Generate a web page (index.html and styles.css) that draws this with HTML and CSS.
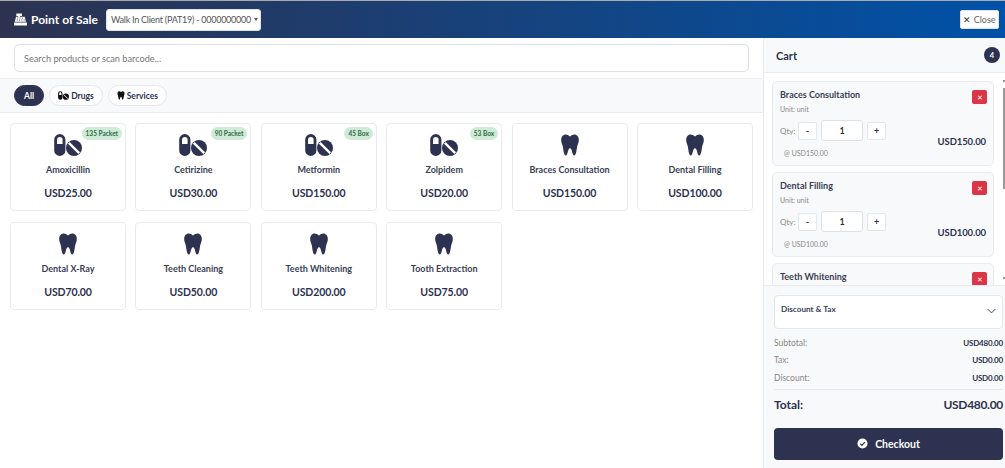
FILE: index.html
```html
<!DOCTYPE html>
<html lang="en">
<head>
<meta charset="utf-8">
<title>Point of Sale</title>
<link rel="stylesheet" href="styles.css">
</head>
<body>
<svg class="defs" width="0" height="0" aria-hidden="true">
  <symbol id="pills" viewBox="0 0 28 22">
    <path d="M5.800 0a5.600 5.600 0 0 1 5.600 5.600v10.800a5.600 5.600 0 0 1-11.200 0V5.600A5.600 5.600 0 0 1 5.800 0z" fill="currentColor"/>
    <path d="M3 10V5.800a2.800 2.800 0 0 1 5.600 0V10z" fill="#fff"/>
    <circle cx="20" cy="14" r="8" fill="currentColor"/>
    <path d="M14.800 8.800l10.400 10.400" stroke="#fff" stroke-width="2.400"/>
  </symbol>
  <symbol id="tooth" viewBox="0 0 20 22">
    <path transform="translate(1 0) scale(.9 1)" d="M5.200 0.500c1.900 0 3.200 1 4.800 1.900 1.600-.9 2.900-1.900 4.800-1.900 3 0 5 2.400 5 5.400 0 2.800-1.300 4.200-1.900 6.800-.6 2.700-.9 8.800-3.300 8.800-2.500 0-1.800-7.200-4.600-7.200s-2.100 7.200-4.600 7.200c-2.400 0-2.700-6.100-3.300-8.800C1.500 10.100.2 8.700.2 5.900c0-3 2-5.400 5-5.400z" fill="currentColor"/>
  </symbol>
</svg>
<header class="topbar">
  <div class="brand">
    <svg class="brand-icon" viewBox="0 0 14 13"><path d="M2.500 0h6v2.600h-2v1h5l1.400 5.400H.8L2.200 3.600h2.300v-1h-2zM0 9.800h14V13H0z" fill="currentColor"/><path d="M3.500 5h1M6 5h1M8.500 5h1M3 7h1M5.500 7h1M8 7h1M10.500 7h1" stroke="#2d3250" stroke-width="1"/></svg>
    <span>Point of Sale</span>
  </div>
  <button class="client">Walk In Client (PAT19) - 0000000000<i class="caret"></i></button>
  <button class="close"><span class="x">✕</span> Close</button>
</header>
<div class="layout">
  <main class="main">
    <div class="search-wrap"><input class="search" placeholder="Search products or scan barcode..."></div>
    <nav class="filters">
      <span class="pill active">All</span>
      <span class="pill"><svg class="pill-icon wide"><use href="#pills"/></svg>Drugs</span>
      <span class="pill"><svg class="pill-icon"><use href="#tooth"/></svg>Services</span>
    </nav>
    <section class="grid">
      <article class="card"><span class="stock">135 Packet</span><svg class="icon"><use href="#pills"/></svg><h3>Amoxicillin</h3><p>USD25.00</p></article>
      <article class="card"><span class="stock">90 Packet</span><svg class="icon"><use href="#pills"/></svg><h3>Cetirizine</h3><p>USD30.00</p></article>
      <article class="card"><span class="stock">45 Box</span><svg class="icon"><use href="#pills"/></svg><h3>Metformin</h3><p>USD150.00</p></article>
      <article class="card"><span class="stock">53 Box</span><svg class="icon"><use href="#pills"/></svg><h3>Zolpidem</h3><p>USD20.00</p></article>
      <article class="card"><svg class="icon"><use href="#tooth"/></svg><h3>Braces Consultation</h3><p>USD150.00</p></article>
      <article class="card"><svg class="icon"><use href="#tooth"/></svg><h3>Dental Filling</h3><p>USD100.00</p></article>
      <article class="card"><svg class="icon"><use href="#tooth"/></svg><h3>Dental X-Ray</h3><p>USD70.00</p></article>
      <article class="card"><svg class="icon"><use href="#tooth"/></svg><h3>Teeth Cleaning</h3><p>USD50.00</p></article>
      <article class="card"><svg class="icon"><use href="#tooth"/></svg><h3>Teeth Whitening</h3><p>USD200.00</p></article>
      <article class="card"><svg class="icon"><use href="#tooth"/></svg><h3>Tooth Extraction</h3><p>USD75.00</p></article>
    </section>
  </main>
  <aside class="cart">
    <div class="cart-head"><strong>Cart</strong><span class="count">4</span></div>
    <div class="items-wrap">
      <div class="items">
        <div class="item">
          <div class="item-top"><div><h4>Braces Consultation</h4><small>Unit: unit</small></div><button class="del">✕</button></div>
          <div class="item-bottom">
            <div>
              <div class="qty"><span class="qty-label">Qty:</span><button>-</button><span class="qty-val">1</span><button>+</button></div>
              <small class="each">@ USD150.00</small>
            </div>
            <b>USD150.00</b>
          </div>
        </div>
        <div class="item">
          <div class="item-top"><div><h4>Dental Filling</h4><small>Unit: unit</small></div><button class="del">✕</button></div>
          <div class="item-bottom">
            <div>
              <div class="qty"><span class="qty-label">Qty:</span><button>-</button><span class="qty-val">1</span><button>+</button></div>
              <small class="each">@ USD100.00</small>
            </div>
            <b>USD100.00</b>
          </div>
        </div>
        <div class="item">
          <div class="item-top"><div><h4>Teeth Whitening</h4></div><button class="del">✕</button></div>
        </div>
      </div>
      <span class="sb-arrow up"></span>
      <span class="sb-thumb"></span>
      <span class="sb-arrow down"></span>
    </div>
    <div class="summary">
      <div class="discount"><span>Discount &amp; Tax</span><svg class="chev" viewBox="0 0 12 7"><path d="M1 1l5 5 5-5" fill="none" stroke="currentColor" stroke-width="1.300"/></svg></div>
      <div class="row"><span>Subtotal:</span><b>USD480.00</b></div>
      <div class="row"><span>Tax:</span><b>USD0.00</b></div>
      <div class="row"><span>Discount:</span><b>USD0.00</b></div>
      <div class="total"><span>Total:</span><span class="total-val">USD480.00</span></div>
      <button class="checkout"><svg class="check" viewBox="0 0 12 12"><circle cx="6" cy="6" r="5.500" fill="currentColor"/><path d="M3.500 6.200l1.800 1.800 3.300-3.500" fill="none" stroke="#2d3250" stroke-width="1.300"/></svg>Checkout</button>
    </div>
  </aside>
</div>
</body>
</html>
```
FILE: styles.css
```css
* { box-sizing: border-box; }
html, body { margin: 0; height: 100%; overflow: hidden; }
body { font-family: "Lato", sans-serif; color: #2d3250; background: #fff; font-size: 9.500px; }
.defs { position: absolute; }
button { font-family: inherit; }
.topbar { height: 38px; display: flex; align-items: center; padding: 0 6px 0 14px; background: linear-gradient(90deg, #2d3250, #0052a8); border-top: 1px solid #aaa; }
.brand { display: flex; align-items: center; gap: 4px; color: #fff; font-weight: 700; font-size: 12px; width: 83px; white-space: nowrap; }
.brand-icon { width: 13px; height: 13px; flex: none; }
.client { margin-left: 9px; height: 22px; width: 155px; padding: 0 4px; border: 1px solid #dee2e6; border-radius: 3px; background: #fff; color: #555; font-size: 9px; letter-spacing: -0.25px; white-space: nowrap; text-align: left; }
.caret { display: inline-block; margin-left: 3px; vertical-align: 2px; border-top: 3px solid #555; border-left: 2.500px solid transparent; border-right: 2.500px solid transparent; }
.close { margin-left: auto; height: 19px; width: 39px; padding: 0; border: 1px solid #dee2e6; border-radius: 2px; background: #fff; color: #666; font-size: 9px; }
.x { color: #333; }
.layout { display: flex; height: 430px; }
.main { width: 764px; border-right: 1px solid #e9ecef; display: flex; flex-direction: column; }
.search-wrap { height: 40px; padding: 6px 14px 0; }
.search { width: 735px; height: 28px; border: 1px solid #dee2e6; border-radius: 5px; padding: 0 9px; font: 9.200px "Lato", sans-serif; outline: none; }
.search::placeholder { color: #777; }
.filters { height: 35px; display: flex; align-items: center; gap: 5px; padding: 0 14px; background: #f8f9fa; border-top: 1px solid #eef0f2; border-bottom: 1px solid #e9ecef; }
.pill { display: inline-flex; align-items: center; gap: 2px; height: 21px; padding: 0 8px; border: 1px solid #e4e7eb; border-radius: 11px; background: #fff; font-weight: 700; font-size: 8.500px; }
.pill.active { background: #2d3250; border-color: #2d3250; color: #fff; padding: 0 9px; }
.pill-icon { width: 8px; height: 9px; color: #111; }
.pill-icon.wide { width: 11px; }
.grid { display: grid; grid-template-columns: repeat(6, 116px); grid-auto-rows: 88px; column-gap: 9.400px; row-gap: 11px; padding: 10px; }
.card { position: relative; display: flex; flex-direction: column; align-items: center; padding-top: 10px; border: 1px solid #e9ecef; border-radius: 4px; background: #fff; }
.icon { width: 28px; height: 22px; color: #2d3250; }
.card h3 { margin: 8px 0 0; font-size: 9px; font-weight: 700; color: #3a3f55; line-height: 12px; }
.card p { margin: 10px 0 0; font-size: 10.500px; letter-spacing: -0.1px; font-weight: 700; line-height: 14px; }
.stock { position: absolute; top: 3px; right: 3px; height: 13px; line-height: 13px; padding: 0 4px; border-radius: 7px; background: #cfead6; color: #2e6b45; font-size: 6.500px; font-weight: 700; }
.cart { flex: 1; display: flex; flex-direction: column; background: #f8f9fa; min-width: 0; }
.cart-head { height: 35px; display: flex; align-items: center; justify-content: space-between; padding: 0 5px 0 12px; border-bottom: 1px solid #e9ecef; font-size: 11px; }
.count { width: 16px; height: 16px; border-radius: 50%; background: #2d3250; color: #fff; font-size: 7.500px; font-weight: 700; display: flex; align-items: center; justify-content: center; }
.items-wrap { position: relative; height: 212px; }
.items { height: 100%; overflow: hidden; padding: 8px 0 0 8px; background: #fff; }
.sb-thumb { position: absolute; right: 0; top: 15px; width: 2px; height: 101px; background: #999; }
.sb-arrow { position: absolute; right: 0; width: 2px; height: 2px; background: #999; }
.sb-arrow.up { top: 7px; }
.sb-arrow.down { top: 204px; }
.item { width: 222px; height: 85px; margin-bottom: 6px; padding: 7px 6px 0 7px; border: 1px solid #e9ecef; border-radius: 5px; background: #f8f9fa; }
.item-top { display: flex; justify-content: space-between; }
.item h4 { margin: 0; font-size: 9px; font-weight: 700; line-height: 12px; color: #3a3f55; }
.item small { display: block; font-size: 7px; line-height: 10px; margin-top: 3px; color: #888; }
.del { width: 15px; height: 14px; padding: 0; border: 0; border-radius: 2px; background: #dc3545; color: #fff; font-size: 7px; margin-top: 1px; }
.item-bottom { display: flex; justify-content: space-between; align-items: flex-end; margin-top: 6px; }
.qty { display: flex; align-items: center; gap: 4px; font-size: 8px; color: #888; }
.qty-label { width: 14px; }
.qty button { width: 19px; height: 18px; padding: 0; border: 1px solid #e4e7eb; border-radius: 2px; background: #fff; font-size: 9px; font-weight: 700; color: #333; }
.qty-val { width: 42px; height: 21px; line-height: 20px; text-align: center; border: 1px solid #dee2e6; border-radius: 3px; background: #fff; color: #333; font-weight: 700; font-size: 9px; }
.item small.each { margin: 7px 0 0 4px; }
.item b { font-size: 9.500px; letter-spacing: -0.1px; font-weight: 700; margin: 0 1px 11px 0; }
.summary { flex: 1; padding: 9px 2px 0 10px; border-top: 1px solid #e9ecef; background: #f8f9fa; }
.discount { height: 34px; display: flex; justify-content: space-between; padding: 8px 6px 0; border: 1px solid #e4e7eb; border-radius: 4px; background: #fff; font-size: 8.200px; font-weight: 700; color: #3a3f55; margin-bottom: 5px; }
.chev { width: 9px; height: 6px; margin-top: 4px; }
.row { height: 17.500px; display: flex; justify-content: space-between; align-items: center; font-size: 8.500px; color: #888; }
.row b { font-weight: 700; font-size: 8px; letter-spacing: -0.2px; color: #2d3250; }
.total { margin-top: 2px; height: 30px; display: flex; justify-content: space-between; align-items: center; border-top: 1px solid #e4e7eb; font-size: 12px; font-weight: 700; }
.total-val { letter-spacing: -0.3px; }
.checkout { margin-top: 9px; width: 100%; height: 32px; border: 0; border-radius: 4px; background: #2d3250; color: #fff; font-size: 10.500px; font-weight: 700; display: flex; align-items: center; justify-content: center; gap: 7px; }
.check { width: 11px; height: 11px; }
```
